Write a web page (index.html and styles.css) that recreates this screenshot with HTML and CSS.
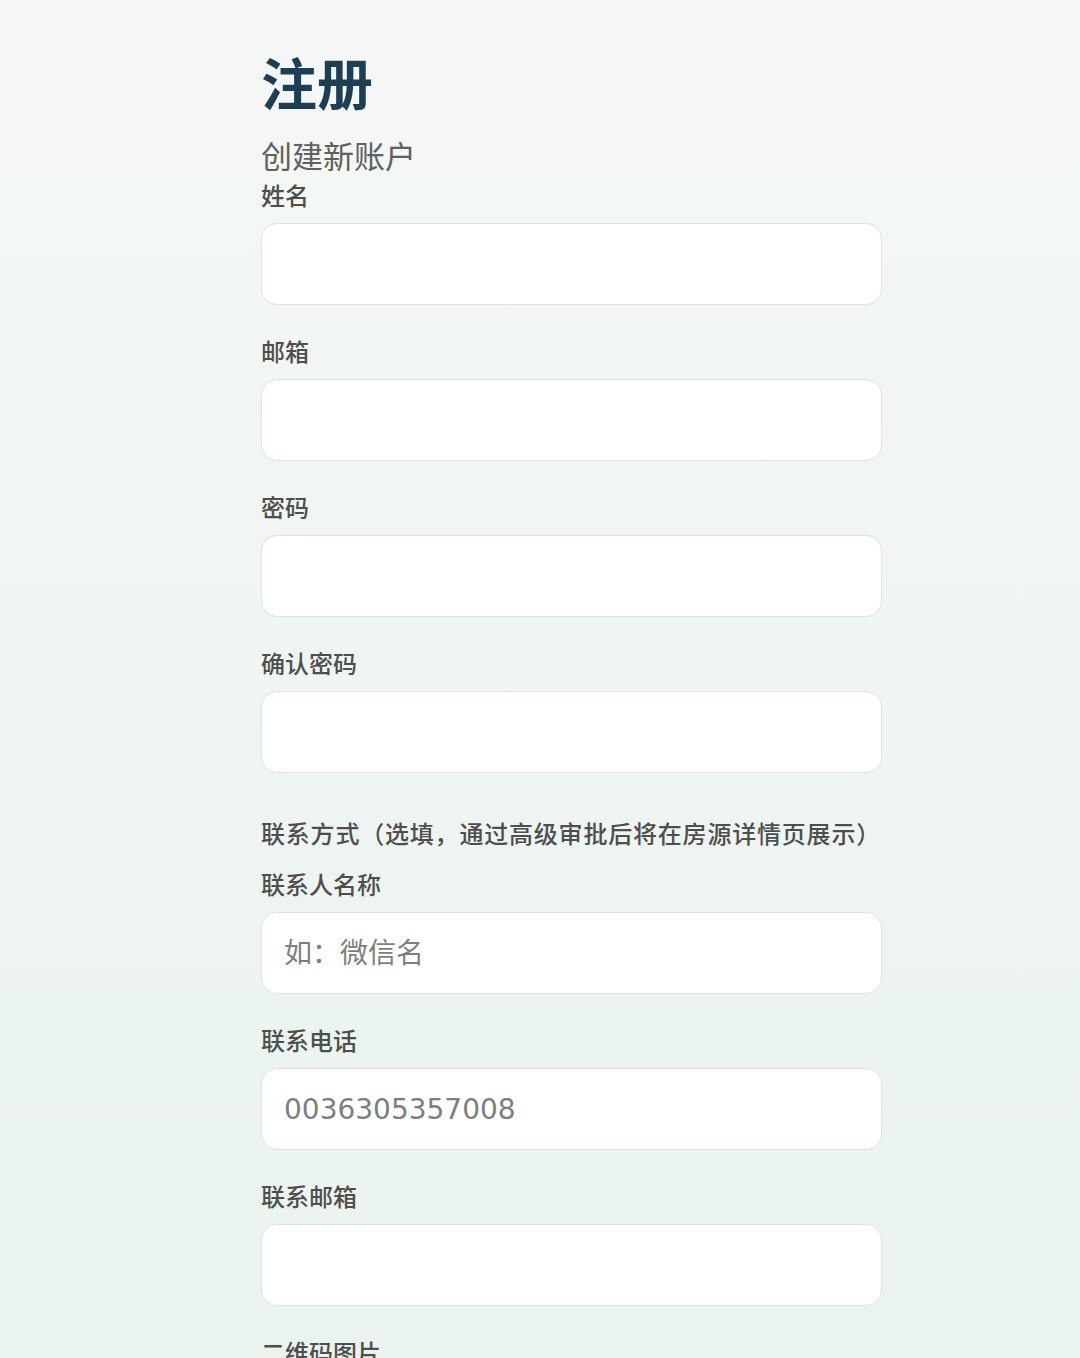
FILE: index.html
```html
<!DOCTYPE html>
<html lang="zh-CN">
<head>
<meta charset="utf-8">
<title>注册</title>
<link rel="stylesheet" href="styles.css">
</head>
<body>
<main class="page">
  <h1 class="title">注册</h1>
  <p class="subtitle">创建新账户</p>

  <div class="field">
    <label class="label">姓名</label>
    <input class="input" type="text">
  </div>
  <div class="field">
    <label class="label">邮箱</label>
    <input class="input" type="email">
  </div>
  <div class="field">
    <label class="label">密码</label>
    <input class="input" type="password">
  </div>
  <div class="field">
    <label class="label">确认密码</label>
    <input class="input" type="password">
  </div>

  <p class="section">联系方式（选填，通过高级审批后将在房源详情页展示）</p>

  <div class="field">
    <label class="label">联系人名称</label>
    <input class="input" type="text" placeholder="如：微信名">
  </div>
  <div class="field">
    <label class="label">联系电话</label>
    <input class="input" type="tel" placeholder="0036305357008">
  </div>
  <div class="field">
    <label class="label">联系邮箱</label>
    <input class="input" type="email">
  </div>
  <div class="field">
    <label class="label">二维码图片</label>
  </div>
</main>
</body>
</html>
```

FILE: styles.css
```css
html, body {
  margin: 0;
  padding: 0;
}
body {
  min-height: 1358px;
  background: linear-gradient(180deg, #f4f7f6 0%, #eff5f2 50%, #eaf3ee 100%);
  font-family: "Noto Sans CJK SC", "Noto Sans", sans-serif;
  overflow: hidden;
}
.page {
  width: 621px;
  margin-left: 261px;
  padding-top: 58px;
  display: flex;
  flex-direction: column;
}
.title {
  margin: 0;
  font-family: "Liberation Serif", "Noto Sans CJK SC", serif;
  font-size: 56px;
  line-height: 56px;
  font-weight: 700;
  color: #1d3f55;
}
.subtitle {
  margin: 25px 0 0;
  font-size: 31px;
  line-height: 31px;
  font-weight: 400;
  color: #606060;
}
.field {
  display: flex;
  flex-direction: column;
  gap: 16px;
  margin-bottom: 34px;
}
.subtitle + .field {
  margin-top: 13px;
}
.label {
  font-size: 24px;
  line-height: 24px;
  font-weight: 500;
  color: #4e4e4e;
}
.input {
  box-sizing: border-box;
  width: 621px;
  height: 82px;
  margin: 0;
  padding: 0 22px;
  background: #ffffff;
  border: 1.5px solid #e2e2e2;
  border-radius: 16px;
  outline: none;
  font-family: "DejaVu Sans", "Noto Sans CJK SC", sans-serif;
  font-size: 28px;
  color: #333;
}
.input::placeholder {
  color: #7e7e7e;
  font-weight: 400;
}
.section {
  margin: 14px 0 27px;
  font-size: 24px;
  line-height: 24px;
  font-weight: 500;
  color: #4e4e4e;
  white-space: nowrap;
  letter-spacing: 0.8px;
}
```
